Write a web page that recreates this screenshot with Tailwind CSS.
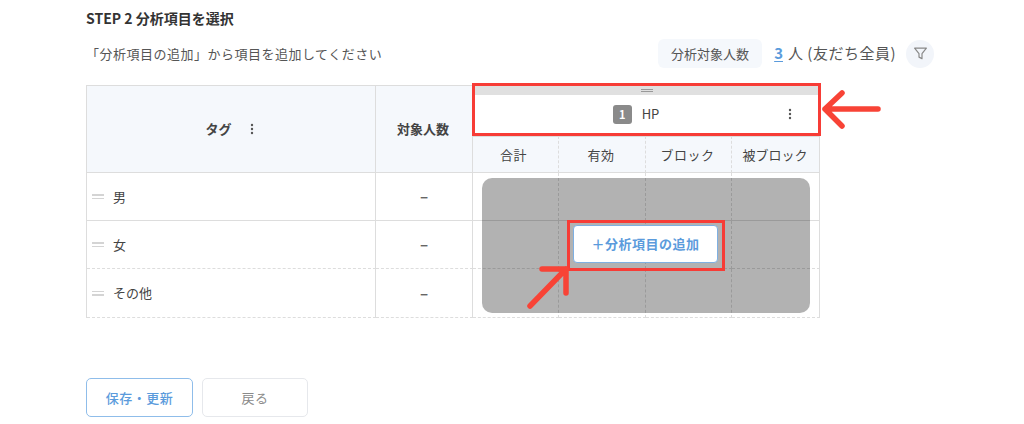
<!DOCTYPE html>
<html lang="ja">
<head>
  <meta charset="UTF-8" />
  <title>STEP 2 分析項目を選択</title>
  <script src="https://cdn.jsdelivr.net/npm/@tailwindcss/browser@4"></script>
</head>
<body class="bg-white text-[#444] font-['Noto_Sans_CJK_JP','Noto_Sans',sans-serif]">
  <main class="relative w-[1024px] h-[424px] overflow-hidden pl-[86px]">
    <h1 class="pt-[9px] h-[42px] text-[14px] leading-[18px] font-bold text-[#333]">STEP 2 分析項目を選択</h1>

    <div class="flex items-center h-[29px] w-[848px] mt-[-3px]">
      <p class="mt-[1px] text-[13px] tracking-[0.5px] text-[#555]">「分析項目の追加」から項目を追加してください</p>
      <div class="ml-auto flex items-center">
        <span class="flex items-center justify-center w-[104px] h-[29px] rounded-md bg-[#f5f8fc] text-[13px] text-[#555]">分析対象人数</span>
        <span class="ml-[12px] text-[15px] font-semibold text-[#5b9bdc] underline underline-offset-2">3</span>
        <span class="ml-[5px] text-[15px] tracking-[0.5px] text-[#555]">人 (友だち全員)</span>
        <span class="ml-[10px] flex items-center justify-center w-[28px] h-[28px] rounded-full bg-[#f2f5fa]">
          <svg width="15" height="15" viewBox="0 0 14 14" fill="none" stroke="#888" stroke-width="1.1" stroke-linejoin="round"><path d="M1.5 2h11L8.4 7.2v4.6L5.6 10.4V7.2z"/></svg>
        </span>
      </div>
    </div>

    <div class="mt-[17px] w-[734px] grid grid-cols-[289px_97px_86px_87px_86px_88px] grid-rows-[51px_37px_48px_48px_49px] border-l border-[#ddd] text-[13px]">
      <div class="row-span-2 flex items-center justify-center pr-[3px] bg-[#f5f8fc] border-y border-r border-[#ddd] font-semibold">
        <span>タグ</span>
        <svg class="ml-[18px]" width="4" height="12" viewBox="0 0 4 12" fill="#555"><circle cx="2" cy="2" r="1.2"/><circle cx="2" cy="6" r="1.2"/><circle cx="2" cy="10" r="1.2"/></svg>
      </div>
      <div class="row-span-2 flex items-center justify-center pr-[2px] bg-[#f5f8fc] border-y border-r border-[#ddd] font-semibold">対象人数</div>
      <div class="col-span-4 flex flex-col bg-white">
        <div class="h-[10px] bg-[#e0e0e0] flex flex-col items-center justify-center gap-[1px]">
          <span class="block w-[12px] h-px bg-[#999]"></span>
          <span class="block w-[12px] h-px bg-[#999]"></span>
        </div>
        <div class="relative flex-1 flex items-center justify-center pb-[3px] pr-[21px]">
          <span class="flex items-center justify-center w-[19px] h-[19px] rounded-[3px] bg-[#8a8a8a] text-white text-[11px] font-semibold">1</span>
          <span class="ml-[10px] text-[13px]">HP</span>
          <svg class="absolute right-[28px] top-[13px]" width="4" height="12" viewBox="0 0 4 12" fill="#555"><circle cx="2" cy="2" r="1.2"/><circle cx="2" cy="6" r="1.2"/><circle cx="2" cy="10" r="1.2"/></svg>
        </div>
      </div>
      <div class="flex items-center justify-center pr-[4px] bg-[#f5f8fc] border-y border-r border-[#ddd] [border-right-style:dashed] tracking-[0.5px]">合計</div>
      <div class="flex items-center justify-center pr-[2px] bg-[#f5f8fc] border-y border-r border-[#ddd] [border-right-style:dashed] tracking-[0.5px]">有効</div>
      <div class="flex items-center justify-center pr-[2px] bg-[#f5f8fc] border-y border-r border-[#ddd] [border-right-style:dashed] tracking-[0.5px]">ブロック</div>
      <div class="flex items-center justify-center pr-[1px] bg-[#f5f8fc] border-y border-r border-[#ddd]">被ブロック</div>

      <div class="flex items-center pl-[5px] border-r border-b border-[#ddd]">
        <span class="flex flex-col gap-[2px]"><i class="block w-[12px] h-[1.5px] bg-[#d4d4d4]"></i><i class="block w-[12px] h-[1.5px] bg-[#d4d4d4]"></i></span>
        <span class="ml-[9px]">男</span>
      </div>
      <div class="flex items-center justify-center border-r border-b border-[#ddd] text-[15px] font-bold text-[#666]">–</div>
      <div class="border-r border-b border-[#ddd] [border-right-style:dashed]"></div>
      <div class="border-r border-b border-[#ddd] [border-right-style:dashed]"></div>
      <div class="border-r border-b border-[#ddd] [border-right-style:dashed]"></div>
      <div class="border-r border-b border-[#ddd]"></div>

      <div class="flex items-center pl-[5px] border-r border-b border-[#ddd] [border-bottom-style:dashed]">
        <span class="flex flex-col gap-[2px]"><i class="block w-[12px] h-[1.5px] bg-[#d4d4d4]"></i><i class="block w-[12px] h-[1.5px] bg-[#d4d4d4]"></i></span>
        <span class="ml-[9px]">女</span>
      </div>
      <div class="flex items-center justify-center border-r border-b border-[#ddd] [border-bottom-style:dashed] text-[15px] font-bold text-[#666]">–</div>
      <div class="border-r border-b border-dashed border-[#ddd]"></div>
      <div class="border-r border-b border-dashed border-[#ddd]"></div>
      <div class="border-r border-b border-dashed border-[#ddd]"></div>
      <div class="border-r border-b border-[#ddd] [border-bottom-style:dashed]"></div>

      <div class="flex items-center pl-[5px] border-r border-b border-[#ddd] [border-bottom-style:dashed]">
        <span class="flex flex-col gap-[2px]"><i class="block w-[12px] h-[1.5px] bg-[#d4d4d4]"></i><i class="block w-[12px] h-[1.5px] bg-[#d4d4d4]"></i></span>
        <span class="ml-[9px]">その他</span>
      </div>
      <div class="flex items-center justify-center border-r border-b border-[#ddd] [border-bottom-style:dashed] text-[15px] font-bold text-[#666]">–</div>
      <div class="border-r border-b border-dashed border-[#ddd]"></div>
      <div class="border-r border-b border-dashed border-[#ddd]"></div>
      <div class="border-r border-b border-dashed border-[#ddd]"></div>
      <div class="border-r border-b border-[#ddd] [border-bottom-style:dashed]"></div>
    </div>

    <div class="mt-[60px] flex gap-[9px] text-[13px] tracking-[0.5px]">
      <button class="w-[107px] h-[39px] rounded-[5px] border border-[#8fbdea] bg-white font-medium text-[#5b9bdc]">保存・更新</button>
      <button class="w-[106px] h-[39px] rounded-[5px] border border-[#e6e8ec] bg-white text-[#8a8a8a]">戻る</button>
    </div>

    <!-- overlay + annotations -->
    <div class="absolute left-[482px] top-[178px] w-[328px] h-[135px] rounded-[10px] bg-black/30 flex items-center justify-center">
      <button class="mt-[-3px] ml-[-1px] w-[145px] h-[38px] rounded-[4px] border border-[#7fb0e2] bg-white text-[13px] tracking-[0.5px] font-semibold text-[#5b9bdc]">＋分析項目の追加</button>
    </div>
    <div class="absolute left-[472px] top-[83px] w-[349px] h-[53px] border-[3px] border-[#f73c36]"></div>
    <div class="absolute left-[567px] top-[220px] w-[158px] h-[51px] border-[3px] border-[#f73c36]"></div>
    <svg class="absolute left-[515px] top-[80px]" width="375" height="240" viewBox="515 80 375 240" fill="none" stroke="#f84336" stroke-width="5.5" stroke-linecap="round" stroke-linejoin="round">
      <path d="M878 109H825M842 93L825 109L842 126"/>
      <path d="M530 306L566 269M542 269H566V293"/>
    </svg>
  </main>
</body>
</html>
